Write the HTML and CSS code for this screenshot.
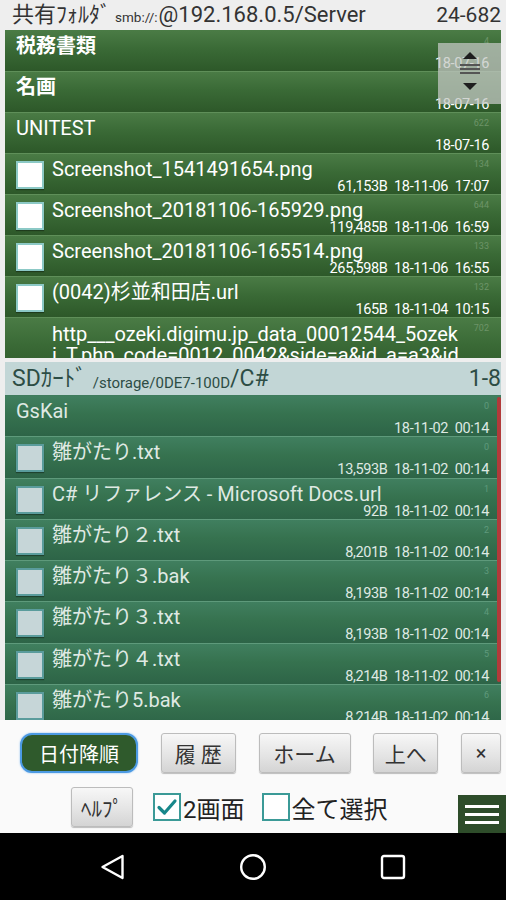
FILE: index.html
```html
<!DOCTYPE html>
<html lang="ja">
<head>
<meta charset="utf-8">
<title>File Manager</title>
<link rel="stylesheet" href="styles.css">
</head>
<body>
<div class="screen">
  <section class="pane">
    <header class="pane-head">
      <span class="path"><span class="big">共有ﾌｫﾙﾀﾞ</span><span class="small">smb://:</span><span class="big">@192.168.0.5/Server</span></span>
      <span class="count">24-682</span>
    </header>
    <div class="list list-top">
      <div class="row folder"><div class="main"><div class="line"><span class="name jp">税務書類</span><span class="idx">4</span></div><div class="meta">18-07-16</div></div></div>
      <div class="row folder"><div class="main"><div class="line"><span class="name jp">名画</span><span class="idx"></span></div><div class="meta">18-07-16</div></div></div>
      <div class="row folder"><div class="main"><div class="line"><span class="name">UNITEST</span><span class="idx">622</span></div><div class="meta">18-07-16</div></div></div>
      <div class="row"><span class="cb"></span><div class="main"><div class="line"><span class="name">Screenshot_1541491654.png</span><span class="idx">134</span></div><div class="meta">61,153B&nbsp; 18-11-06&nbsp; 17:07</div></div></div>
      <div class="row"><span class="cb"></span><div class="main"><div class="line"><span class="name">Screenshot_20181106-165929.png</span><span class="idx">644</span></div><div class="meta">119,485B&nbsp; 18-11-06&nbsp; 16:59</div></div></div>
      <div class="row"><span class="cb"></span><div class="main"><div class="line"><span class="name">Screenshot_20181106-165514.png</span><span class="idx">133</span></div><div class="meta">265,598B&nbsp; 18-11-06&nbsp; 16:55</div></div></div>
      <div class="row"><span class="cb"></span><div class="main"><div class="line"><span class="name">(0042)杉並和田店.url</span><span class="idx">132</span></div><div class="meta">165B&nbsp; 18-11-04&nbsp; 10:15</div></div></div>
      <div class="row tall"><span class="cb-space"></span><div class="main"><div class="line"><span class="name wrap">http___ozeki.digimu.jp_data_00012544_5ozeki_T.php_code=0012_0042&amp;side=a&amp;id_a=a3&amp;id</span><span class="idx">702</span></div></div></div>
      <div class="scroller">
        <span class="tri-up"></span>
        <span class="bars"><i></i><i></i><i></i></span>
        <span class="tri-down"></span>
      </div>
    </div>
  </section>

  <section class="pane pane-sd">
    <header class="pane-head sd-head">
      <span class="path"><span class="big">SDｶｰﾄﾞ</span><span class="small">/storage/0DE7-100D</span><span class="big">/C#</span></span>
      <span class="count">1-8</span>
    </header>
    <div class="list list-bottom">
      <div class="row folder"><div class="main"><div class="line"><span class="name">GsKai</span><span class="idx">0</span></div><div class="meta">18-11-02&nbsp; 00:14</div></div></div>
      <div class="row"><span class="cb"></span><div class="main"><div class="line"><span class="name">雛がたり.txt</span><span class="idx">0</span></div><div class="meta">13,593B&nbsp; 18-11-02&nbsp; 00:14</div></div></div>
      <div class="row"><span class="cb"></span><div class="main"><div class="line"><span class="name">C# リファレンス - Microsoft Docs.url</span><span class="idx">1</span></div><div class="meta">92B&nbsp; 18-11-02&nbsp; 00:14</div></div></div>
      <div class="row"><span class="cb"></span><div class="main"><div class="line"><span class="name">雛がたり２.txt</span><span class="idx">2</span></div><div class="meta">8,201B&nbsp; 18-11-02&nbsp; 00:14</div></div></div>
      <div class="row"><span class="cb"></span><div class="main"><div class="line"><span class="name">雛がたり３.bak</span><span class="idx">3</span></div><div class="meta">8,193B&nbsp; 18-11-02&nbsp; 00:14</div></div></div>
      <div class="row"><span class="cb"></span><div class="main"><div class="line"><span class="name">雛がたり３.txt</span><span class="idx">4</span></div><div class="meta">8,193B&nbsp; 18-11-02&nbsp; 00:14</div></div></div>
      <div class="row"><span class="cb"></span><div class="main"><div class="line"><span class="name">雛がたり４.txt</span><span class="idx">5</span></div><div class="meta">8,214B&nbsp; 18-11-02&nbsp; 00:14</div></div></div>
      <div class="row"><span class="cb"></span><div class="main"><div class="line"><span class="name">雛がたり5.bak</span><span class="idx">6</span></div><div class="meta">8,214B&nbsp; 18-11-02&nbsp; 00:14</div></div></div>
      <span class="scrollbar"></span>
    </div>
  </section>

  <footer class="toolbar">
    <div class="btn-row">
      <button class="btn btn-sort">日付降順</button>
      <button class="btn btn-hist">履 歴</button>
      <button class="btn btn-home">ホーム</button>
      <button class="btn btn-up">上へ</button>
      <button class="btn btn-close">×</button>
    </div>
    <div class="btn-row2">
      <button class="btn btn-help">ﾍﾙﾌﾟ</button>
      <label class="check"><span class="box checked"><svg viewBox="0 0 24 24" width="24" height="24"><path d="M4 12.5 L9.5 18 L20 6" fill="none" stroke="#17878a" stroke-width="3.2" stroke-linecap="round" stroke-linejoin="round"/></svg></span>2画面</label>
      <label class="check check-all"><span class="box"></span>全て選択</label>
      <button class="menu"><i></i><i></i><i></i></button>
    </div>
  </footer>

  <nav class="navbar">
    <svg class="nav-icon" viewBox="0 0 26 26" width="26" height="26"><path d="M22.5 2 L2.5 13 L22.5 24 Z" fill="none" stroke="#fff" stroke-width="2.4" stroke-linejoin="round"/></svg>
    <svg class="nav-icon" viewBox="0 0 26 26" width="26" height="26"><circle cx="13" cy="13" r="11.8" fill="none" stroke="#fff" stroke-width="2.4"/></svg>
    <svg class="nav-icon" viewBox="0 0 26 26" width="26" height="26"><rect x="2" y="2" width="22" height="22" rx="2" fill="none" stroke="#fff" stroke-width="2.4"/></svg>
  </nav>
</div>
</body>
</html>
```
FILE: styles.css
```css
* { box-sizing: border-box; }
html, body { margin: 0; padding: 0; }
body {
  font-family: "Roboto", "Noto Sans CJK JP", sans-serif;
  background: #000;
}
.screen {
  width: 506px;
  height: 900px;
  display: flex;
  flex-direction: column;
  background: #eeeeee;
  overflow: hidden;
}

/* pane header */
.pane-head {
  height: 30px;
  display: flex;
  align-items: center;
  justify-content: space-between;
  padding: 0 5px 0 12px;
  color: #333;
  white-space: nowrap;
}
.pane-head .big { font-size: 22px; line-height: 30px; }
.pane-head .small { font-size: 13.5px; margin: 0 1px 0 4px; }
.pane-head .count { font-size: 21px; }

.pane-sd { margin-top: 4px; }
.sd-head {
  height: 33px;
  margin: 0 5px;
  padding: 0 0 0 7px;
  background: #c2d6d6;
  color: #2d4d45;
}
.sd-head .small { font-size: 15px; margin: 0 0 0 6px; position: relative; top: 2px; }
.sd-head .big { font-size: 23px; }
.sd-head .count { font-size: 23px; }

/* lists */
.list {
  position: relative;
  margin: 0 5px;
  overflow: hidden;
}
.list-top { height: 328px; background: #2c5628; }
.list-bottom { height: 325px; background: #2e6549; }

.row {
  height: 41px;
  display: flex;
  align-items: flex-start;
  padding: 0 12px 0 6px;
  color: #fff;
  border-top: 1px solid #5f8f59;
  background: linear-gradient(#4a7b45, #3a6a36 45%, #2d5829);
}
.list-top .row:first-child { border-top-color: #4a7b45; }
.list-bottom .row {
  height: 41.3px;
  color: #dfe9e3;
  border-top: 1px solid #5e9a7b;
  background: linear-gradient(#407f5f, #36724f 45%, #2d6447);
}
.list-bottom .row:first-child { border-top-color: #3f7c5d; }
.row.tall { height: 60px; }

.cb, .cb-space {
  flex: none;
  width: 28px;
  height: 28px;
  margin: 7px 8px 0 5px;
}
.cb {
  background: #fff;
  border: 2px solid #8cc9c6;
  box-shadow: 0 1px 1px rgba(0,0,0,0.35);
}
.list-bottom .cb {
  background: #c6d6d8;
  border-color: #5a9c9c;
}

.main {
  flex: 1;
  min-width: 0;
  display: flex;
  flex-direction: column;
  padding-top: 3px;
}
.folder .main { padding-left: 5px; }
.line {
  display: flex;
  align-items: flex-start;
}
.name {
  flex: 1;
  min-width: 0;
  font-size: 20px;
  line-height: 25px;
  white-space: nowrap;
}
.name.jp { font-weight: 700; }
.name.wrap {
  white-space: normal;
  word-break: break-all;
  line-height: 21px;
  padding-top: 3px;
  padding-right: 14px;
}
.idx {
  flex: none;
  font-size: 9px;
  line-height: 14px;
  color: #6d9468;
}
.list-bottom .idx { color: #5f9a7c; }
.meta {
  text-align: right;
  font-size: 14.5px;
  letter-spacing: -0.35px;
  line-height: 12px;
  margin-top: -1px;
  white-space: nowrap;
}

/* overlay scroll handle */
.scroller {
  position: absolute;
  right: 0;
  top: 13px;
  width: 63px;
  height: 61px;
  background: rgba(196, 200, 196, 0.74);
  display: flex;
  flex-direction: column;
  align-items: center;
  padding-top: 9px;
}
.tri-up, .tri-down {
  width: 0; height: 0;
  border-left: 7px solid transparent;
  border-right: 7px solid transparent;
}
.tri-up { border-bottom: 7px solid #1e1e1e; }
.tri-down { border-top: 7px solid #1e1e1e; }
.bars {
  display: flex;
  flex-direction: column;
  gap: 2px;
  margin: 5px 0 9px;
}
.bars i {
  display: block;
  width: 20px;
  height: 2px;
  background: #555;
}

.scrollbar {
  position: absolute;
  right: 0;
  top: 2px;
  width: 4px;
  height: 285px;
  border-radius: 2px;
  background: #b23a3a;
}

/* toolbar */
.toolbar {
  height: 113px;
  background: #fafafa;
  padding-top: 13px;
  display: flex;
  flex-direction: column;
}
.btn-row {
  height: 40px;
  display: flex;
  justify-content: space-between;
  padding: 0 5px 0 20px;
}
.btn {
  height: 40px;
  font-family: "Roboto", "Noto Sans CJK JP", sans-serif;
  font-size: 21px;
  color: #333;
  background: linear-gradient(#f7f7f7, #e3e3e3 60%, #d4d4d4);
  border: 1px solid #bcbcbc;
  border-radius: 3px;
  box-shadow: 0 1px 1px rgba(0,0,0,0.25);
  padding: 0;
  cursor: pointer;
}
.btn-sort {
  width: 118px;
  background: #2f5a2c;
  color: #fff;
  border: 2px solid #4c9ae3;
  border-radius: 12px;
  box-shadow: 0 0 2px #7fb8ee;
  font-size: 20px;
}
.btn-hist { width: 75px; }
.btn-home { width: 92px; }
.btn-up { width: 65px; }
.btn-close { width: 40px; font-size: 20px; }

.btn-row2 {
  margin-top: 14px;
  height: 46px;
  display: flex;
  align-items: flex-start;
  padding-left: 71px;
}
.btn-help { width: 62px; font-size: 21px; }
.check {
  display: flex;
  align-items: center;
  height: 40px;
  font-size: 24px;
  color: #222;
  margin-left: 20px;
}
.check-all { margin-left: 17px; }
.box {
  width: 28px;
  height: 28px;
  border: 2px solid #3b9a97;
  background: #fff;
  margin-right: 2px;
  display: flex;
  align-items: center;
  justify-content: center;
}
.menu {
  margin-left: auto;
  align-self: flex-end;
  width: 48px;
  height: 38px;
  background: #2e4d2a;
  border: none;
  padding: 0;
  display: flex;
  flex-direction: column;
  align-items: center;
  justify-content: center;
  gap: 5px;
}
.menu i {
  display: block;
  width: 34px;
  height: 3px;
  background: #fff;
}

/* android nav bar */
.navbar {
  flex: 1;
  background: #000;
  display: flex;
  align-items: center;
  justify-content: center;
  gap: 114px;
}
.nav-icon { display: block; }
```
